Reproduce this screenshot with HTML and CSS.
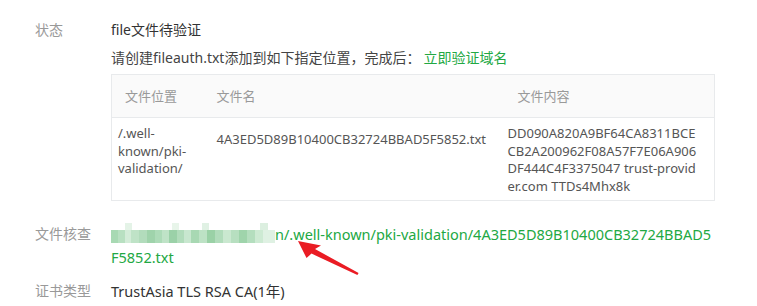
FILE: index.html
```html
<!DOCTYPE html>
<html lang="zh-CN">
<head>
    <meta charset="UTF-8">
    <title>证书详情</title>
    <link rel="stylesheet" href="styles.css">
</head>
<body>
    <div class="detail">
        <div class="detail-row">
            <div class="detail-label">状态</div>
            <div class="detail-value">
                <p class="status-text">file文件待验证</p>
                <p class="status-tip">请创建fileauth.txt添加到如下指定位置，完成后：<a href="#" class="link">立即验证域名</a></p>
                <table class="file-table">
                    <colgroup>
                        <col class="col-path">
                        <col class="col-name">
                        <col class="col-content">
                    </colgroup>
                    <thead>
                        <tr>
                            <th class="th-path">文件位置</th>
                            <th class="th-name">文件名</th>
                            <th class="th-content">文件内容</th>
                        </tr>
                    </thead>
                    <tbody>
                        <tr>
                            <td class="td-path">/.well-known/pki-validation/</td>
                            <td class="td-name">4A3ED5D89B10400CB32724BBAD5F5852.txt</td>
                            <td class="td-content">DD090A820A9BF64CA8311BCECB2A200962F08A57F7E06A906DF444C4F3375047 trust-provider.com TTDs4Mhx8k</td>
                        </tr>
                    </tbody>
                </table>
            </div>
        </div>

        <div class="detail-row row-check">
            <div class="detail-label">文件核查</div>
            <div class="detail-value">
                <a href="#" class="link check-url"><span class="mosaic"></span>n/.well-known/pki-validation/4A3ED5D89B10400CB32724BBAD5F5852.txt</a>
            </div>
        </div>

        <div class="detail-row row-type">
            <div class="detail-label">证书类型</div>
            <div class="detail-value type-text">TrustAsia TLS RSA CA(1年)</div>
        </div>

        <!-- red pointer drawn over the screenshot -->
        <svg class="pointer" width="757" height="306" viewBox="0 0 757 306">
            <polygon fill="#ea1c24" points="298,241 321,245.5 315,249 358.6,273.1 357.4,274.9 311.5,253.6 306.5,258"/>
        </svg>
    </div>
</body>
</html>
```

FILE: styles.css
```css
* {
    margin: 0;
    padding: 0;
    box-sizing: border-box;
}

body {
    font-family: "Noto Sans", "Noto Sans CJK SC", sans-serif;
    font-size: 14px;
    color: #333;
    background-color: #fff;
}

.detail {
    position: relative;
    width: 757px;
    height: 306px;
    padding: 8px 0 0 35px;
    overflow: hidden;
}

.detail-row {
    display: flex;
    padding-top: 11px;
}

.detail-label {
    width: 76px;
    flex-shrink: 0;
    color: #999;
    line-height: 22px;
}

.detail-value {
    width: 603px;
    line-height: 22px;
}

.status-text {
    margin-bottom: 6px;
}

.status-tip {
    margin-bottom: 5px;
    color: #444;
}

.link {
    color: #22a843;
    text-decoration: none;
}

.status-tip .link {
    margin-left: 3px;
}

.file-table {
    width: 603px;
    table-layout: fixed;
    border-collapse: collapse;
    border: 1px solid #e8eaec;
    margin-bottom: 11px;
    font-size: 13px;
}

.col-path {
    width: 99px;
}

.col-name {
    width: 293px;
}

.col-content {
    width: 211px;
}

.file-table th {
    height: 43px;
    background-color: #fafafa;
    color: #999;
    font-weight: normal;
    text-align: left;
    border-bottom: 1px solid #e8eaec;
}

.th-path {
    padding-left: 13px;
}

.th-name {
    padding-left: 6px;
}

.th-content {
    padding-left: 14px;
}

.file-table td {
    height: 83px;
    vertical-align: top;
    color: #555;
    line-height: 17.5px;
    padding: 7px 7px 0 6px;
}

.file-table .td-name {
    padding-top: 13px;
    white-space: nowrap;
}

.file-table .td-content {
    word-break: break-all;
    padding: 7px 14px 0 4px;
}

.check-url {
    word-break: break-all;
    font-size: 14.5px;
}

.type-text {
    font-size: 14.5px;
}

.mosaic {
    display: inline-block;
    position: relative;
    width: 164px;
    height: 13px;
    vertical-align: -3px;
    background: linear-gradient(to right,
        #a8d9b3 0 7px, #b8e0c1 7px 14px, #d3ecd8 14px 20px, #bfe3c7 20px 28px,
        #b2dcbc 28px 36px, #9fd3ab 36px 44px, #addbb8 44px 51px, #bfe3c7 51px 58px,
        #9bd1a8 58px 66px, #b1dcbb 66px 73px, #c8e7cf 73px 80px, #a8d8b3 80px 88px,
        #bde2c5 88px 96px, #9ad1a6 96px 104px, #b1dcbb 104px 112px, #cae8d0 112px 120px,
        #b7dfc0 120px 128px, #9fd4ab 128px 136px, #b4debe 136px 144px, #cdead3 144px 152px,
        #dff1e3 152px 164px);
}

.mosaic::before {
    content: '';
    position: absolute;
    left: 0;
    top: -7px;
    width: 164px;
    height: 7px;
    background: linear-gradient(to right,
        transparent 0 14px, #e4f3e7 14px 21px, transparent 21px 61px, #e8f5ea 61px 68px,
        transparent 68px 91px, #e0f1e4 91px 98px, transparent 98px 149px, #dcefe0 149px 157px,
        transparent 157px);
}

.pointer {
    position: absolute;
    top: 0;
    left: 0;
    pointer-events: none;
}
```
